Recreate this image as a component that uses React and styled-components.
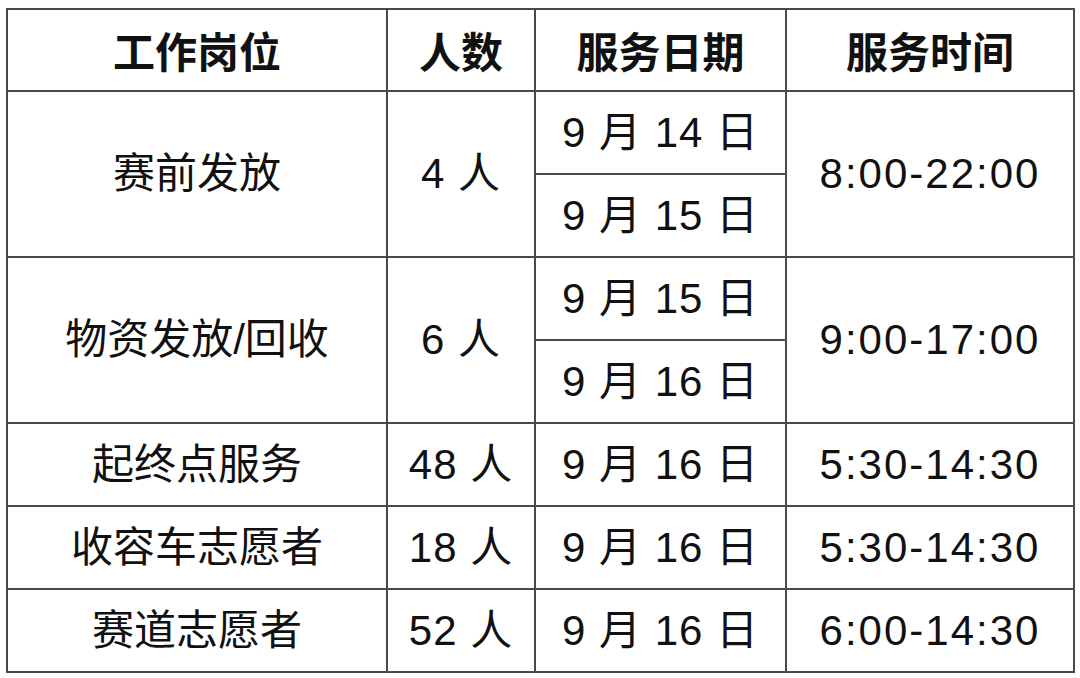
import React from "react";
import styled, { createGlobalStyle } from "styled-components";

const GlobalStyle = createGlobalStyle`
  html, body {
    margin: 0;
    padding: 0;
    background: #ffffff;
  }
  body {
    font-family: "Liberation Sans", "Noto Sans CJK SC", sans-serif;
    color: #111111;
  }
`;

const Page = styled.div`
  width: 1080px;
  height: 678px;
  box-sizing: border-box;
  padding: 8px 0 0 6px;
  background: #ffffff;
`;

const Table = styled.table`
  border-collapse: collapse;
  table-layout: fixed;
  width: 1067px;
`;

const Col = styled.col`
  width: ${(p) => p.$w}px;
`;

const Row = styled.tr`
  height: ${(p) => p.$h || 83}px;
`;

const HeadCell = styled.th`
  border: 2px solid #4a4a4a;
  padding: 0;
  font-family: "Noto Sans CJK SC", sans-serif;
  font-size: 42px;
  font-weight: 700;
  text-align: center;
  vertical-align: middle;
  line-height: 1;
  color: #111111;
`;

const Cell = styled.td`
  border: 2px solid #4a4a4a;
  padding: 0;
  font-family: "Liberation Sans", "Noto Sans CJK SC", sans-serif;
  font-size: 42px;
  font-weight: 400;
  text-align: center;
  vertical-align: middle;
  line-height: 1;
  color: #111111;
  letter-spacing: ${(p) => p.$ls || 0}px;
  white-space: nowrap;
`;

const rows = [
  { post: "赛前发放", count: "4 人", dates: ["9 月 14 日", "9 月 15 日"], time: "8:00-22:00" },
  { post: "物资发放/回收", count: "6 人", dates: ["9 月 15 日", "9 月 16 日"], time: "9:00-17:00" },
  { post: "起终点服务", count: "48 人", dates: ["9 月 16 日"], time: "5:30-14:30" },
  { post: "收容车志愿者", count: "18 人", dates: ["9 月 16 日"], time: "5:30-14:30" },
  { post: "赛道志愿者", count: "52 人", dates: ["9 月 16 日"], time: "6:00-14:30" },
];

export default function App() {
  return (
    <Page>
      <GlobalStyle />
      <Table>
        <colgroup>
          <Col $w={380} />
          <Col $w={148} />
          <Col $w={251} />
          <Col $w={288} />
        </colgroup>
        <thead>
          <Row $h={82}>
            <HeadCell>工作岗位</HeadCell>
            <HeadCell>人数</HeadCell>
            <HeadCell>服务日期</HeadCell>
            <HeadCell>服务时间</HeadCell>
          </Row>
        </thead>
        <tbody>
          {rows.map((r) =>
            r.dates.map((d, i) => (
              <Row key={r.post + d}>
                {i === 0 && <Cell rowSpan={r.dates.length}>{r.post}</Cell>}
                {i === 0 && (
                  <Cell rowSpan={r.dates.length} $ls={1}>
                    {r.count}
                  </Cell>
                )}
                <Cell $ls={1}>{d}</Cell>
                {i === 0 && (
                  <Cell rowSpan={r.dates.length} $ls={2}>
                    {r.time}
                  </Cell>
                )}
              </Row>
            ))
          )}
        </tbody>
      </Table>
    </Page>
  );
}
